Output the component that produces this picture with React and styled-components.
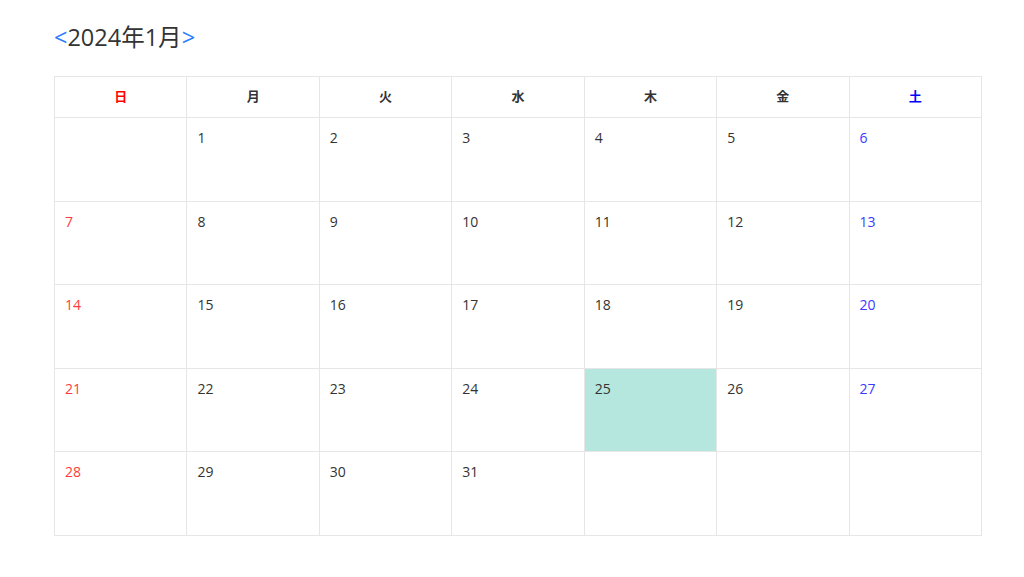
import React from "react";
import styled, { createGlobalStyle } from "styled-components";

const GlobalStyle = createGlobalStyle`
  html, body {
    margin: 0;
    padding: 0;
    background: #fff;
    font-family: "Open Sans", "Noto Sans CJK JP", sans-serif;
    color: #333;
  }
`;

const Page = styled.div`
  padding: 22px 42px 0 54px;
`;

const Title = styled.h1`
  margin: 0 0 24px;
  font-size: 23.5px;
  font-weight: 400;
  line-height: 30px;
  color: #333;
`;

const NavLink = styled.a`
  color: #2b7dff;
  text-decoration: none;
  cursor: pointer;
`;

const Grid = styled.div`
  display: grid;
  grid-template-columns: repeat(7, 1fr);
  grid-template-rows: 41px repeat(5, 83.6px);
  border-top: 1px solid #e6e6e6;
  border-left: 1px solid #e6e6e6;
`;

const HeadCell = styled.div`
  display: flex;
  align-items: center;
  justify-content: center;
  padding-bottom: 3px;
  border-right: 1px solid #e6e6e6;
  border-bottom: 1px solid #e6e6e6;
  font-size: 13px;
  font-weight: 700;
  color: ${(p) => (p.$tone === "sun" ? "#f00" : p.$tone === "sat" ? "#00f" : "#333")};
`;

const DayCell = styled.div`
  padding: 10px 10px 8px;
  border-right: 1px solid #e6e6e6;
  border-bottom: 1px solid #e6e6e6;
  font-size: 14px;
  line-height: 20px;
  background: ${(p) => (p.$today ? "#b5e7df" : "#fff")};
  color: ${(p) => (p.$tone === "sun" ? "#ff3b3b" : p.$tone === "sat" ? "#3b3bff" : "#333")};
`;

const WEEKDAYS = ["日", "月", "火", "水", "木", "金", "土"];

function tone(i) {
  if (i % 7 === 0) return "sun";
  if (i % 7 === 6) return "sat";
  return "";
}

export default function App() {
  const first = 1; // 2024-01-01 is a Monday
  const cells = [];
  for (let i = 0; i < 35; i++) {
    const d = i - first + 1;
    cells.push(d >= 1 && d <= 31 ? d : null);
  }

  return (
    <>
      <GlobalStyle />
      <Page>
        <Title>
          <NavLink>&lt;</NavLink>2024年1月<NavLink>&gt;</NavLink>
        </Title>
        <Grid>
          {WEEKDAYS.map((w, i) => (
            <HeadCell key={w} $tone={tone(i)}>
              {w}
            </HeadCell>
          ))}
          {cells.map((d, i) => (
            <DayCell key={i} $tone={tone(i)} $today={d === 25}>
              {d}
            </DayCell>
          ))}
        </Grid>
      </Page>
    </>
  );
}
